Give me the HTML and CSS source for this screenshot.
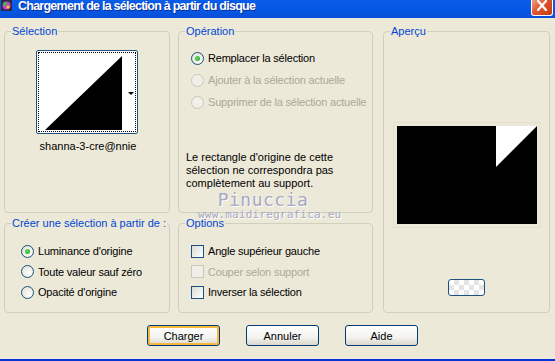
FILE: index.html
```html
<!DOCTYPE html>
<html lang="fr">
<head>
  <meta charset="UTF-8">
  <title>Chargement de la sélection à partir du disque</title>
  <link rel="stylesheet" href="styles.css">
</head>
<body>

  <div class="window">
    <div class="titlebar">
      <span class="app-icon">
        <svg width="13" height="13" viewBox="0 0 13 13">
          <rect x="1" y="1" width="11" height="11" fill="#2a2a40"/>
          <circle cx="6.5" cy="6.5" r="4" fill="#d23ad6"/>
          <circle cx="5" cy="5" r="2" fill="#36c23a"/>
          <circle cx="8" cy="8" r="1.6" fill="#f0d020"/>
        </svg>
      </span>
      <span class="title">Chargement de la sélection à partir du disque</span>
      <span class="close">
        <svg width="20" height="17" viewBox="0 0 20 17">
          <path d="M6 3 L14 12 M14 3 L6 12" stroke="#fff" stroke-width="2.2" stroke-linecap="round"/>
        </svg>
      </span>
    </div>

    <div class="content">
      <div class="groups">

        <fieldset class="group sel">
          <legend>Sélection</legend>
          <div class="thumb">
            <svg width="96" height="78" viewBox="0 0 96 78">
              <rect width="96" height="78" fill="#fff"/>
              <polygon points="6,77 83,3 83,77" fill="#000"/>
              <polygon points="89,39 95,39 92,42" fill="#000"/>
            </svg>
          </div>
          <div class="thumb-name">shanna-3-cre@nnie</div>
        </fieldset>

        <fieldset class="group op">
          <legend>Opération</legend>
          <div class="choice"><span class="radio checked"></span>Remplacer la sélection</div>
          <div class="choice disabled"><span class="radio"></span>Ajouter à la sélection actuelle</div>
          <div class="choice disabled"><span class="radio"></span>Supprimer de la sélection actuelle</div>
          <p class="note">Le rectangle d'origine de cette sélection ne correspondra pas complètement au support.</p>
        </fieldset>

        <fieldset class="group preview">
          <legend>Aperçu</legend>
          <div class="preview-frame">
            <svg width="140" height="98" viewBox="0 0 140 98">
              <rect width="140" height="98" fill="#000"/>
              <polygon points="99,0 140,0 99,41" fill="#fff"/>
            </svg>
          </div>
          <div class="swatch"></div>
        </fieldset>

        <fieldset class="group create">
          <legend>Créer une sélection à partir de :</legend>
          <div class="choice tight"><span class="radio checked"></span>Luminance d'origine</div>
          <div class="choice tight"><span class="radio"></span>Toute valeur sauf zéro</div>
          <div class="choice tight"><span class="radio"></span>Opacité d'origine</div>
        </fieldset>

        <fieldset class="group options">
          <legend>Options</legend>
          <div class="choice tight"><span class="check"></span>Angle supérieur gauche</div>
          <div class="choice tight disabled"><span class="check"></span>Couper selon support</div>
          <div class="choice tight"><span class="check"></span>Inverser la sélection</div>
        </fieldset>

      </div>

      <div class="buttons">
        <button class="default">Charger</button>
        <button>Annuler</button>
        <button>Aide</button>
      </div>

      <div class="watermark">
        <div class="wm-name">Pinuccia</div>
        <div class="wm-site">www.maidiregrafica.eu</div>
      </div>
    </div>
  </div>

</body>
</html>
```

FILE: styles.css
```css
html, body {
  margin: 0;
  padding: 0;
}

body {
  font-family: "Liberation Sans", Arial, sans-serif;
  font-size: 11px;
  color: #000;
  background: #ece9d8;
}

.window {
  width: 555px;
  height: 359px;
  background: #ece9d8;
  border-bottom: 2px solid #0831d9;
  position: relative;
  overflow: hidden;
}

/* Title bar */
.titlebar {
  height: 18px;
  background: linear-gradient(#0a5de8, #0556e4 60%, #0a4fd6);
  display: flex;
  align-items: flex-start;
  position: relative;
}

.app-icon {
  width: 14px;
  height: 13px;
}

.app-icon svg {
  display: block;
  margin-top: -1px;
}

.title {
  margin-left: 4px;
  color: #fff;
  font-weight: bold;
  font-size: 12.5px;
  line-height: 13px;
  letter-spacing: -0.75px;
  text-shadow: 1px 1px 0 #0a2e9a;
  white-space: nowrap;
}

.close {
  margin-left: auto;
  margin-right: 2px;
  width: 20px;
  height: 16px;
  margin-top: -1px;
  background: linear-gradient(135deg, #f0a58e, #e0532c 45%, #c33b12);
  border: 1px solid #fff;
  border-top: none;
  border-radius: 0 0 3px 3px;
}

.close svg {
  display: block;
  margin-top: -1px;
}

/* Content */
.content {
  padding: 7px 0 0 4px;
  position: relative;
}

.groups {
  display: grid;
  grid-template-columns: 166px 195px 169px;
  grid-template-rows: 188px 96px;
  column-gap: 8px;
  row-gap: 4px;
}

.group {
  margin: 0;
  padding: 0;
  border: 1px solid #d0d0bf;
  border-radius: 4px;
  min-width: 0;
}

.group legend {
  color: #0046d5;
  margin-left: 6px;
  padding: 0 1px;
  line-height: 13px;
}

.sel { grid-column: 1; grid-row: 1; }
.op { grid-column: 2; grid-row: 1; }
.preview { grid-column: 3; grid-row: 1 / 3; margin-left: 2px; }
.create { grid-column: 1; grid-row: 2; }
.options { grid-column: 2; grid-row: 2; }

/* Selection thumbnail */
.thumb {
  width: 100px;
  height: 82px;
  margin: 12px auto 0;
  border: 1px solid #1c5180;
  border-radius: 2px;
  background: #fff;
  position: relative;
  display: flex;
  align-items: center;
  justify-content: center;
}

.thumb::before {
  content: "";
  position: absolute;
  inset: 1px;
  border: 1px dotted #000;
}

.thumb svg {
  display: block;
}

.thumb-name {
  text-align: center;
  margin-top: 6px;
  padding-left: 2px;
}

/* Radio / check rows */
.choice {
  display: flex;
  align-items: center;
  height: 22px;
  padding-left: 12px;
  white-space: nowrap;
  letter-spacing: -0.2px;
}

.op .choice:first-of-type {
  margin-top: 9px;
}

.choice.tight {
  height: 20.5px;
}

.create .choice:first-of-type,
.options .choice:first-of-type {
  margin-top: 11px;
}

.create .choice {
  padding-left: 16px;
}

.choice.disabled {
  color: #aca899;
}

.radio {
  width: 11px;
  height: 11px;
  border: 1px solid #1c5180;
  border-radius: 50%;
  background: radial-gradient(circle at 65% 65%, #fff, #dcdad0);
  margin-right: 4px;
  position: relative;
  flex-shrink: 0;
}

.radio.checked::after {
  content: "";
  position: absolute;
  left: 3px;
  top: 3px;
  width: 5px;
  height: 5px;
  border-radius: 50%;
  background: radial-gradient(circle at 40% 40%, #5ddc5d, #21a121);
}

.disabled .radio,
.disabled .check {
  border-color: #cac8bb;
  background: #f0efe8;
}

.check {
  width: 11px;
  height: 11px;
  border: 1px solid #1c5180;
  background: linear-gradient(135deg, #dcdbd3, #fff);
  margin-right: 4px;
  flex-shrink: 0;
}

.note {
  margin: 38px 0 0 7px;
  line-height: 13px;
  width: 160px;
}

/* Preview */
.preview-frame {
  width: 146px;
  height: 104px;
  margin: 84px auto 0;
  border: 1px solid #e3e0d1;
  display: flex;
  align-items: center;
  justify-content: center;
}

.preview-frame svg {
  display: block;
}

.swatch {
  width: 35px;
  height: 15px;
  margin: 51px auto 0;
  border: 1px solid #1c5180;
  border-radius: 3px;
  background-color: #fff;
  background-image:
    linear-gradient(45deg, #e4e4e4 25%, transparent 25%, transparent 75%, #e4e4e4 75%),
    linear-gradient(45deg, #e4e4e4 25%, transparent 25%, transparent 75%, #e4e4e4 75%);
  background-size: 10px 10px;
  background-position: 0 0, 5px 5px;
}

/* Buttons */
.buttons {
  display: flex;
  gap: 26px;
  padding-left: 143px;
  margin-top: 12px;
}

button {
  width: 73px;
  height: 21px;
  padding: 0;
  font-family: "Liberation Sans", Arial, sans-serif;
  font-size: 11px;
  color: #000;
  border: 1px solid #003c74;
  border-radius: 3px;
  background: linear-gradient(#fff, #f3f3ef 60%, #d9d7cc);
}

button.default {
  box-shadow: inset 0 0 0 2px #f8b83e;
}

/* Watermark */
.watermark {
  position: absolute;
  left: 198px;
  top: 173px;
  width: 130px;
  text-align: center;
  color: #a6a8c4;
  text-shadow: 1px 1px 0 #fff;
  pointer-events: none;
}

.wm-name {
  font-family: "DejaVu Sans Mono", monospace;
  font-size: 18px;
  line-height: 18px;
  letter-spacing: 0.5px;
}

.wm-site {
  font-family: "DejaVu Sans Mono", monospace;
  font-size: 11px;
  line-height: 12px;
  letter-spacing: 0.2px;
}
```
